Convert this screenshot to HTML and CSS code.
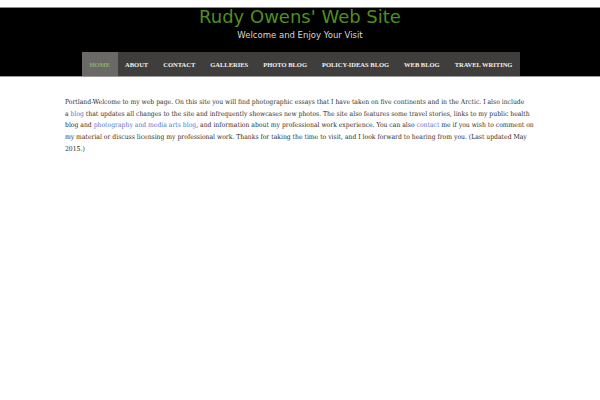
FILE: index.html
```html
<!DOCTYPE html>
<html>
<head>
<meta charset="utf-8">
<link rel="stylesheet" href="styles.css">
</head>
<body>
<div class="top"></div>
<header class="header">
  <h1 class="title">Rudy Owens' Web Site</h1>
  <p class="tagline">Welcome and Enjoy Your Visit</p>
  <nav class="nav">
    <a class="nav-item active">HOME</a>
    <a class="nav-item">ABOUT</a>
    <a class="nav-item">CONTACT</a>
    <a class="nav-item">GALLERIES</a>
    <a class="nav-item">PHOTO BLOG</a>
    <a class="nav-item">POLICY-IDEAS BLOG</a>
    <a class="nav-item">WEB BLOG</a>
    <a class="nav-item">TRAVEL WRITING</a>
  </nav>
</header>
<main class="content">
  <p class="intro">Portland-Welcome to my web page. On this site you will find photographic essays that I have taken on five continents and in the Arctic. I also include<br>a <a class="link">blog</a> that updates all changes to the site and infrequently showcases new photos. The site also features some travel stories, links to my public health blog and <a class="link">photography and media arts blog</a>, and information about my professional work experience. You can also <a class="link">contact</a> me if you wish to comment on my material or discuss licensing my professional work. Thanks for taking the time to visit, and I look forward to hearing from you. (Last updated May 2015.)</p>
</main>
</body>
</html>
```
FILE: styles.css
```css
html, body { margin: 0; padding: 0; background: #fff; }
.top { height: 7px; background: #fff; }
.header {
  background: #000;
  border-top: 1px solid #8a8a8a;
  border-bottom: 1px solid #9a9a9a;
  height: 68px;
  display: flex;
  flex-direction: column;
  align-items: center;
  box-sizing: content-box;
}
.title {
  margin: 0;
  padding-top: 0;
  font-family: "DejaVu Sans", sans-serif;
  font-weight: normal;
  font-size: 18px;
  line-height: 18px;
  color: #4f8f1f;
}
.tagline {
  margin: 4px 0 0;
  font-family: "DejaVu Sans", sans-serif;
  font-size: 8.5px;
  line-height: 10px;
  color: #d8d8d8;
}
.nav {
  margin-top: auto;
  display: flex;
  background: #3f3e3c;
  height: 24px;
  width: 438px;
  margin-left: 2px;
}
.nav-item {
  display: flex;
  align-items: center;
  padding: 0 7.5px;
  font-family: "Liberation Serif", serif;
  font-weight: bold;
  font-size: 6.5px;
  color: #f2f2f2;
}
.nav-item.active { background: #6a6968; color: #8fae6a; }
.content { padding: 0 65px; }
.intro {
  margin: 20px 0 0;
  width: 472px;
  font-family: "DejaVu Serif Condensed", "DejaVu Serif", serif;
  font-stretch: condensed;
  font-size: 6.75px;
  line-height: 11.7px;
  color: #2e2e2e;
}
.link { color: #5577d6; }
```
